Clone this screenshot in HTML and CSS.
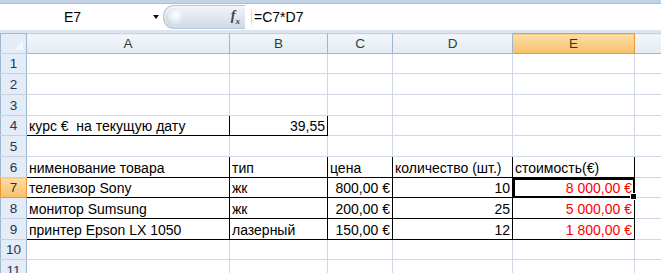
FILE: index.html
```html
<!DOCTYPE html>
<html lang="ru">
<head>
    <meta charset="utf-8">
    <title>Книга1</title>
    <link rel="stylesheet" href="styles.css">
</head>
<body>
    <div class="ribbon-edge"></div>
    <div class="formula-bar">
        <div class="name-box">
            <span class="cell-name">E7</span>
            <span class="arrow"></span>
        </div>
        <div class="pill">
            <span class="knob"></span>
            <span class="fx">f<sub>x</sub></span>
        </div>
        <div class="formula">=C7*D7</div>
    </div>
    <div class="gap"></div>

    <table class="sheet">
        <colgroup>
            <col class="c-hdr">
            <col class="c-a">
            <col class="c-b">
            <col class="c-c">
            <col class="c-d">
            <col class="c-e">
            <col class="c-f">
        </colgroup>
        <tr class="col-heads">
            <th class="corner"><span class="tri"></span></th>
            <th>A</th><th>B</th><th>C</th><th>D</th><th class="sel">E</th><th></th>
        </tr>
        <tr><th>1</th><td></td><td></td><td></td><td></td><td></td><td></td></tr>
        <tr class="h21"><th>2</th><td></td><td></td><td></td><td></td><td></td><td></td></tr>
        <tr class="h21"><th>3</th><td></td><td></td><td></td><td></td><td></td><td></td></tr>
        <tr><th>4</th><td class="b">курс €&nbsp; на текущую дату</td><td class="b r">39,55</td><td></td><td></td><td></td><td></td></tr>
        <tr class="h21"><th>5</th><td></td><td></td><td></td><td></td><td></td><td></td></tr>
        <tr class="h21"><th>6</th><td class="b">нименование товара</td><td class="b">тип</td><td class="b">цена</td><td class="b">количество (шт.)</td><td class="b">стоимость(€)</td><td></td></tr>
        <tr><th class="sel">7</th><td class="b">телевизор Sony</td><td class="b">жк</td><td class="b r">800,00 €</td><td class="b r">10</td><td class="b r red active">8 000,00 €<span class="handle"></span></td><td></td></tr>
        <tr class="h21"><th>8</th><td class="b">монитор Sumsung</td><td class="b">жк</td><td class="b r">200,00 €</td><td class="b r">25</td><td class="b r red">5 000,00 €</td><td></td></tr>
        <tr class="h21"><th>9</th><td class="b">принтер Epson LX 1050</td><td class="b">лазерный</td><td class="b r">150,00 €</td><td class="b r">12</td><td class="b r red">1 800,00 €</td><td></td></tr>
        <tr><th>10</th><td></td><td></td><td></td><td></td><td></td><td></td></tr>
        <tr class="h21"><th>11</th><td></td><td></td><td></td><td></td><td></td><td></td></tr>
    </table>
</body>
</html>
```

FILE: styles.css
```css
html {
    font-family: 'Liberation Sans', Arial, sans-serif;
}

body {
    margin: 0;
    width: 661px;
    height: 273px;
    overflow: hidden;
    background: #ffffff;
}

.ribbon-edge {
    height: 3px;
    background: #c3d3e8;
    border-bottom: 1px solid #a9bfd6;
}

.formula-bar {
    display: flex;
    align-items: center;
    height: 26px;
    background: #ffffff;
}

.name-box {
    width: 163px;
    display: flex;
    align-items: center;
    font-size: 14px;
    color: #000000;
}

.cell-name {
    margin-left: 64px;
}

.arrow {
    margin-left: 72px;
    width: 0;
    height: 0;
    border-left: 3px solid transparent;
    border-right: 3px solid transparent;
    border-top: 4px solid #111111;
}

.pill {
    position: relative;
    width: 81px;
    height: 22px;
    border-radius: 11px 0 0 11px;
    background: linear-gradient(#f3f6fa, #dfe6ef 55%, #cfd9e6);
    border: 1px solid #b7c6d9;
    border-right: none;
    display: flex;
    align-items: center;
    justify-content: flex-end;
}

.knob {
    position: absolute;
    left: 2px;
    top: 2px;
    width: 17px;
    height: 17px;
    border-radius: 50%;
    background: radial-gradient(circle at 60% 40%, #ffffff, #e1e6ec 60%, #aab4c0);
}

.fx {
    font-family: 'Liberation Serif', serif;
    font-style: italic;
    font-weight: bold;
    font-size: 14px;
    color: #3a4350;
    margin-right: 5px;
}

.fx sub {
    font-size: 9px;
}

.formula {
    margin-left: 6px;
    font-size: 14px;
    border-left: 1px solid #d9e1ec;
    padding-left: 2px;
}

.gap {
    height: 3px;
    background: #dbe5f1;
}

.sheet {
    border-collapse: collapse;
    table-layout: fixed;
    width: 661px;
    font-size: 14px;
}

.c-hdr { width: 26px; }
.c-a { width: 203px; }
.c-b { width: 98px; }
.c-c { width: 65px; }
.c-d { width: 120px; }
.c-e { width: 122px; }
.c-f { width: 27px; }

.sheet tr {
    height: 20px;
}

.sheet tr.h21 {
    height: 21px;
}

.sheet tr.col-heads {
    height: 20px;
}

.sheet th {
    font-weight: normal;
    color: #27413e;
    background: linear-gradient(#f3f6fb, #e4ebf4);
    border: 1px solid #9eb6ce;
    border-top-color: #c5d2e2;
    padding: 0;
    text-align: center;
    font-size: 13.5px;
}

.sheet tr th:first-child {
    background: #e4ecf7;
    border-color: #9eb6ce;
    border-bottom-color: #c5d2e2;
    color: #1f3553;
}

.sheet th.corner {
    position: relative;
    background: #d3dff0;
}

.tri {
    position: absolute;
    right: 3px;
    bottom: 3px;
    width: 0;
    height: 0;
    border-left: 9px solid transparent;
    border-bottom: 9px solid #f4f7fb;
}

.sheet tr th.sel {
    background: linear-gradient(#fbdda4, #f6c16b);
    border-color: #f29536;
    color: #3b3020;
}

.sheet td {
    border: 1px solid #d0d7e5;
    padding: 0 2px;
    white-space: nowrap;
    overflow: hidden;
    vertical-align: bottom;
    line-height: 17px;
}

.sheet td.b {
    border: 1px solid #000000;
}

.sheet td.r {
    text-align: right;
}

.sheet td.red {
    color: #ff0000;
}

.sheet td.active {
    position: relative;
    overflow: visible;
    outline: 2px solid #000000;
    outline-offset: -2px;
}

.handle {
    position: absolute;
    right: -3px;
    bottom: -3px;
    width: 5px;
    height: 5px;
    background: #000000;
    border: 1px solid #ffffff;
}
```
